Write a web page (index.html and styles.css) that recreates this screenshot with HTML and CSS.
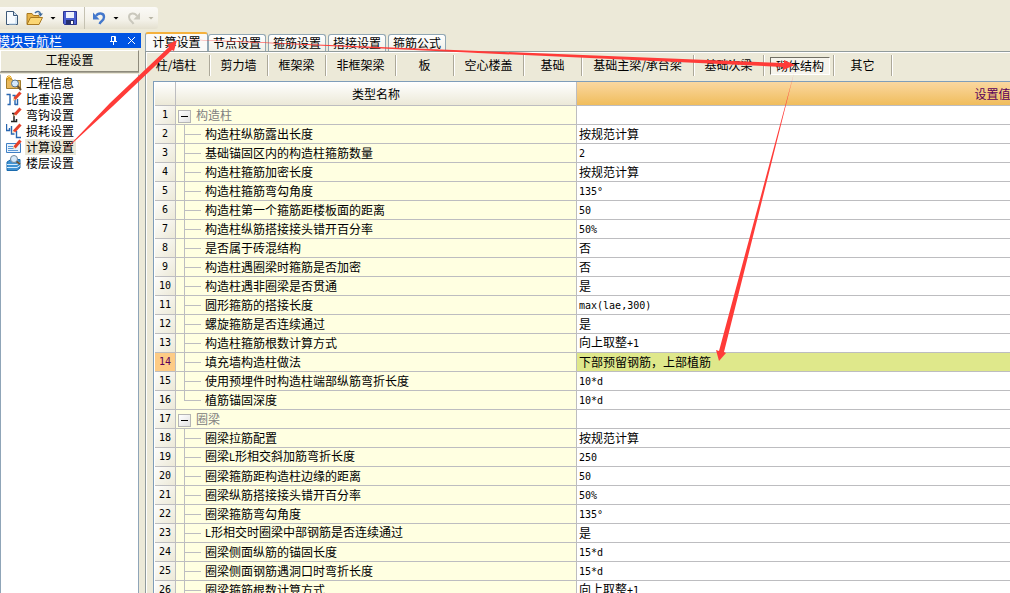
FILE: index.html
```html
<!DOCTYPE html>
<html lang="zh-CN">
<head>
<meta charset="utf-8">
<title>工程设置</title>
<link rel="stylesheet" href="styles.css">
</head>
<body>
<div class="app">
<header class="toolbar" role="toolbar" aria-label="常用">
<button class="tool" aria-label="新建"><svg width="16" height="16" viewBox="0 0 16 16"><path d="M2.500 1.500h7l4 4v9h-11z" fill="#f7fbff" stroke="#3c5878"/><path d="M9.500 1.500v4h4" fill="#cfe0f0" stroke="#3c5878"/><path d="M12 7v7H5" fill="none" stroke="#b7d3ea"/></svg></button>
<button class="tool" aria-label="打开"><svg width="18" height="16" viewBox="0 0 18 16"><path d="M1 14V3.500h5l1.500 2H13V8" fill="#e8b448" stroke="#a87820"/><path d="M1 14.500L4.500 7.500h12L13 14.500z" fill="#fbd673" stroke="#a87820"/><path d="M9 3c2-2.500 5-2 5.500 1" fill="none" stroke="#3f6b9b" stroke-width="1.500"/><path d="M12 3.500h5l-2.500 3z" fill="#3f6b9b"/></svg></button>
<button class="drop" aria-label="打开选项"></button>
<button class="tool save" aria-label="保存"><svg width="16" height="16" viewBox="0 0 16 16"><path d="M1.500 1.500h13v13h-12l-1-1z" fill="#4a5fd0" stroke="#2c3494"/><path d="M4 2h8v6H4z" fill="#eef2fc"/><path d="M4 10h8v4.500H4z" fill="#26306c"/><path d="M9 11h2v3H9z" fill="#fff"/></svg></button>
<span class="bar"></span>
<button class="tool" aria-label="撤销"><svg width="16" height="16" viewBox="0 0 16 16"><path d="M5 6c2-3.500 8-3.500 8 1C13 10.500 10 11 8.500 14" fill="none" stroke="#4478cc" stroke-width="2.400"/><path d="M2 2.500v7h6.500z" fill="#4478cc"/></svg></button>
<button class="drop" aria-label="撤销选项"></button>
<button class="tool redo" aria-label="恢复" disabled><svg width="16" height="16" viewBox="0 0 16 16"><path d="M11 6C9 2.500 3 2.500 3 7 3 10.500 6 11 7.500 14" fill="none" stroke="#cac8bd" stroke-width="2"/><path d="M14 2.500v7H7.500z" fill="#cac8bd"/></svg></button>
<button class="drop off" aria-label="恢复选项" disabled></button>
</header>
<div class="body">
<aside class="side">
<div class="side-title"><span class="side-name">模块导航栏</span>
<button class="cap" aria-label="固定"><svg width="9" height="9" viewBox="0 0 9 9"><path d="M2.500 5V.500h4V5M5.500 1v4M1 5.500h7M4.500 6v3" fill="none" stroke="#fff"/></svg></button>
<button class="cap" aria-label="关闭"><svg width="9" height="9" viewBox="0 0 9 9"><path d="M1 1l7 7M8 1L1 8" fill="none" stroke="#fff"/></svg></button></div>
<button class="section">工程设置</button>
<nav class="list">
<a href="#info" class="item"><svg width="16" height="16" viewBox="0 0 16 16"><path d="M.500 13.500v-10h5l1 2h8v8z" fill="#e9b95c" stroke="#a27c2c"/><path d="M3 0v6M0 3h6M1 1l4 4M5 1L1 5" stroke="#e8a71c"/><circle cx="9" cy="8.500" r="3.500" fill="#d5e9fa" stroke="#56718e"/><path d="M11.500 11l3.500 4" stroke="#6b5230" stroke-width="2"/></svg><span>工程信息</span></a>
<a href="#weight" class="item"><svg width="16" height="16" viewBox="0 0 16 16"><path d="M.500 3.500H4v10H1.500M6.500 4.500H9v9.500M9 13.500h2.500V8" fill="none" stroke="#2866b0" stroke-width="1.400"/><path d="M8.500 8L14.500 1.500" stroke="#e5412b" stroke-width="3"/><path d="M7 10l.500-3 2 1.800z" fill="#f5c88c"/></svg><span>比重设置</span></a>
<a href="#hook" class="item"><svg width="16" height="16" viewBox="0 0 16 16"><path d="M6 6.500h4M8 6v8M5 14.500h5.500V12" fill="none" stroke="#222" stroke-width="1.500"/><path d="M9 7.500L14.500 1.500" stroke="#e5412b" stroke-width="3"/><path d="M7.500 9.500l.300-2.500 1.800 1.600z" fill="#f5c88c"/></svg><span>弯钩设置</span></a>
<a href="#loss" class="item"><svg width="16" height="16" viewBox="0 0 16 16"><path d="M.500 1v6.500h3V5M5.500 3v8h3M10.500 8v6.500H15" fill="none" stroke="#2866b0" stroke-width="1.400"/><path d="M8 8.500L14.500 1.500" stroke="#e5412b" stroke-width="3"/><path d="M6.500 10l.300-2.500 1.800 1.600z" fill="#f5c88c"/></svg><span>损耗设置</span></a>
<a href="#calc" class="item on" aria-current="page"><svg width="16" height="16" viewBox="0 0 16 16"><path d="M.500 4.500h14v9H.500z" fill="#e6f2fd" stroke="#3f7fc4"/><path d="M2 7.500h5M2 9.500h6M2 11.500h10" stroke="#5c98d4"/><path d="M8.500 8.500L14.500 1.500" stroke="#e5412b" stroke-width="3"/><path d="M7 10l.500-2.500 1.800 1.600z" fill="#f5c88c"/></svg><span>计算设置</span></a>
<a href="#floor" class="item"><svg width="16" height="16" viewBox="0 0 16 16"><path d="M1 7l4-2.500h9V13l-3 2.500H1z" fill="#3f92d2" stroke="#1b6bae"/><path d="M1 9.500h10l3-2M1 12.500h10l3-2" fill="none" stroke="#d5edfc"/><circle cx="8" cy="4" r="3.500" fill="#d5e9fa" stroke="#71889c"/><path d="M10.500 6.500L14 9" stroke="#6b5230" stroke-width="1.800"/></svg><span>楼层设置</span></a>
</nav>
</aside>
<main class="main">
<div class="tabs" role="tablist">
<button class="tab on" role="tab" aria-selected="true">计算设置</button>
<button class="tab" role="tab">节点设置</button>
<button class="tab" role="tab">箍筋设置</button>
<button class="tab" role="tab">搭接设置</button>
<button class="tab" role="tab">箍筋公式</button>
</div>
<div class="page">
<div class="kinds" role="toolbar" aria-label="构件类型">
<button class="kind first">柱/墙柱</button>
<button class="kind">剪力墙</button>
<button class="kind">框架梁</button>
<button class="kind wide">非框架梁</button>
<button class="kind">板</button>
<button class="kind wide">空心楼盖</button>
<button class="kind">基础</button>
<button class="kind widest">基础主梁/承台梁</button>
<button class="kind wide">基础次梁</button>
<button class="kind wide" aria-pressed="true"><span class="pressed">砌体结构</span></button>
<button class="kind">其它</button>
</div>
<div class="grid">
<table>
<colgroup><col class="c-no"><col class="c-name"><col class="c-val"></colgroup>
<thead><tr><th></th><th>类型名称</th><th class="h-val">设置值</th></tr></thead>
<tbody>
<tr class="group"><th>1</th><td><button class="fold" aria-label="折叠"></button>构造柱</td><td></td></tr>
<tr><th>2</th><td>构造柱纵筋露出长度</td><td>按规范计算</td></tr>
<tr><th>3</th><td>基础锚固区内的构造柱箍筋数量</td><td><span class="n">2</span></td></tr>
<tr><th>4</th><td>构造柱箍筋加密长度</td><td>按规范计算</td></tr>
<tr><th>5</th><td>构造柱箍筋弯勾角度</td><td><span class="n">135°</span></td></tr>
<tr><th>6</th><td>构造柱第一个箍筋距楼板面的距离</td><td><span class="n">50</span></td></tr>
<tr><th>7</th><td>构造柱纵筋搭接接头错开百分率</td><td><span class="n">50%</span></td></tr>
<tr><th>8</th><td>是否属于砖混结构</td><td>否</td></tr>
<tr><th>9</th><td>构造柱遇圈梁时箍筋是否加密</td><td>否</td></tr>
<tr><th>10</th><td>构造柱遇非圈梁是否贯通</td><td>是</td></tr>
<tr><th>11</th><td>圆形箍筋的搭接长度</td><td><span class="n">max(lae,300)</span></td></tr>
<tr><th>12</th><td>螺旋箍筋是否连续通过</td><td>是</td></tr>
<tr><th>13</th><td>构造柱箍筋根数计算方式</td><td>向上取整<span class="n">+1</span></td></tr>
<tr class="sel"><th>14</th><td>填充墙构造柱做法</td><td>下部预留钢筋，上部植筋</td></tr>
<tr><th>15</th><td>使用预埋件时构造柱端部纵筋弯折长度</td><td><span class="n">10*d</span></td></tr>
<tr class="last"><th>16</th><td>植筋锚固深度</td><td><span class="n">10*d</span></td></tr>
<tr class="group"><th>17</th><td><button class="fold" aria-label="折叠"></button>圈梁</td><td></td></tr>
<tr><th>18</th><td>圈梁拉筋配置</td><td>按规范计算</td></tr>
<tr><th>19</th><td>圈梁<span class="n">L</span>形相交斜加筋弯折长度</td><td><span class="n">250</span></td></tr>
<tr><th>20</th><td>圈梁箍筋距构造柱边缘的距离</td><td><span class="n">50</span></td></tr>
<tr><th>21</th><td>圈梁纵筋搭接接头错开百分率</td><td><span class="n">50%</span></td></tr>
<tr><th>22</th><td>圈梁箍筋弯勾角度</td><td><span class="n">135°</span></td></tr>
<tr><th>23</th><td><span class="n">L</span>形相交时圈梁中部钢筋是否连续通过</td><td>是</td></tr>
<tr><th>24</th><td>圈梁侧面纵筋的锚固长度</td><td><span class="n">15*d</span></td></tr>
<tr><th>25</th><td>圈梁侧面钢筋遇洞口时弯折长度</td><td><span class="n">15*d</span></td></tr>
<tr><th>26</th><td>圈梁箍筋根数计算方式</td><td>向上取整<span class="n">+1</span></td></tr>
</tbody>
</table>
</div>
</div>
</main>
</div>
<svg class="arrows" width="1010" height="593" viewBox="0 0 1010 593" fill="#ff3b38" aria-hidden="true">
<path d="M64 151L110 103L169 47L167 45L177 40L174 51L172 50L113 106Z"/>
<path d="M177 39L784 63V60L795 65L783 70V67Z"/>
<path d="M794 73L724 352L726 353L719 361L716 350L719 351Z"/>
</svg>
</div>
</body>
</html>
```
FILE: styles.css
```css
* { box-sizing: border-box; }
body {
  margin: 0;
  background: #ece9d8;
  color: #000;
  font: 12px/16px "Noto Sans CJK SC", sans-serif;
}
button {
  margin: 0;
  padding: 0;
  border: 0;
  background: none;
  color: inherit;
  font: inherit;
  white-space: nowrap;
}
.app {
  position: relative;
  display: flex;
  flex-direction: column;
  height: 100vh;
  overflow: hidden;
}

/* toolbar */
.toolbar {
  display: flex;
  align-items: center;
  align-self: flex-start;
  height: 22px;
  margin: 7px 0 3px;
  padding: 0 4px;
  border-radius: 0 3px 3px 0;
  background: linear-gradient(#fbfaf7, #f3f1e8 60%, #e4e0cf);
}
.tool { display: flex; margin-right: 6px; }
.drop {
  width: 6px;
  height: 3px;
  background: #000;
  clip-path: polygon(0 0, 100% 0, 50% 100%);
}
.drop.off { background: #b8b5a6; }
.tool.save { margin: 0 6px; }
.bar { width: 1px; height: 22px; margin-right: 6px; background: #c5c2b2; }
.tool.redo { margin-left: 7px; }

.body { display: flex; flex: 1; min-height: 0; }

/* navigation */
.side {
  display: flex;
  flex-direction: column;
  flex: none;
  width: 141px;
  padding-top: 1px;
}
.side-title {
  display: flex;
  align-items: center;
  height: 15px;
  padding-right: 5px;
  background: #0054e3;
  color: #fff;
  font-size: 13px;
}
.side-name { flex: 1; margin-left: -3px; }
.cap { display: flex; margin-left: 9px; }
.section {
  height: 22px;
  margin: 2px 2px 2px 0;
  padding-bottom: 2px;
  border: 1px solid;
  border-color: #fff #8d8a7c #8d8a7c #fff;
  box-shadow: 0 1px #aaa798;
}
.list {
  flex: 1;
  margin-right: 2px;
  border: 1px solid #8fa5b8;
  border-bottom: 0;
  border-top-color: #fff;
  padding-left: 5px;
  background: #fff;
}
.item {
  display: flex;
  gap: 3px;
  height: 16px;
  color: #000;
  text-decoration: none;
}
.item span { padding: 0 2px 0 1px; }
.item.on span { background: #ece9d8; }

/* tabs */
.main {
  display: flex;
  flex-direction: column;
  flex: 1;
  min-width: 0;
  padding-left: 4px;
}
.tabs { display: flex; align-items: flex-end; gap: 2px; height: 19px; }
.tab {
  width: 58px;
  height: 17px;
  border: 1px solid #91a7b4;
  border-bottom: 0;
  border-radius: 3px 3px 0 0;
  background: linear-gradient(#fff, #f0efe6);
}
.tab.on {
  width: 63px;
  height: 20px;
  margin: 0 -2px -1px 0;
  padding-bottom: 2px;
  border-top: 2px solid #f5b13c;
  background: #fbfaf8;
}
.page {
  display: flex;
  flex-direction: column;
  flex: 1;
  min-height: 0;
  padding: 3px 0 0 2px;
  border: 1px solid #919b9c;
  border-width: 1px 0 0 1px;
  box-shadow: inset 1px 1px #fff;
}
.kinds { display: flex; height: 21px; }
.kind {
  flex: none;
  width: 58px;
  padding: 0 2px 2px 0;
  border-right: 1px solid #fff;
  box-shadow: inset -1px 0 #aca899;
}
.kind.first { width: 63px; padding-right: 6px; }
.kind.wide { width: 70px; }
.kind.widest { width: 112px; }
.kind[aria-pressed] { padding: 0; }
.pressed {
  display: block;
  margin: 0 4px 0 5px;
  border: 1px solid;
  border-color: #716f64 #fff #fff #716f64;
  background: #f6f4ec;
}

/* settings grid */
.grid {
  flex: 1;
  min-height: 0;
  margin: 5px 0 0 5px;
  padding: 0 0 0 1px;
  border: 1px solid #7f9db9;
  border-width: 1px 0 0 1px;
  background: #fff;
  overflow: hidden;
}
table { width: 1254px; border-spacing: 0; table-layout: fixed; }
.c-no { width: 21px; }
.c-name { width: 401px; }
th, td {
  height: 19px;
  padding: 0;
  border: 1px solid #bdbdc0;
  border-width: 0 1px 1px 0;
  font-weight: normal;
  line-height: 16px;
  text-align: left;
  white-space: nowrap;
}
thead th {
  height: 24px;
  text-align: center;
  background: linear-gradient(#fff, #ece9d8);
}
thead .h-val {
  background: linear-gradient(#fad7a0, #f0bd5c);
  color: #5a005a;
}
tbody th {
  background: linear-gradient(135deg, #fdfdfb, #ece9d8);
  font: 10px/16px "DejaVu Sans Mono", monospace;
  text-align: center;
}
td:nth-child(2) {
  padding-left: 29px;
  background:
    linear-gradient(#bdbdc0, #bdbdc0) 8px 9px / 17px 1px no-repeat,
    linear-gradient(#bdbdc0, #bdbdc0) 8px 0 / 1px 100% no-repeat,
    #ffffe1;
}
.last td:nth-child(2) {
  background:
    linear-gradient(#bdbdc0, #bdbdc0) 8px 9px / 17px 1px no-repeat,
    linear-gradient(#bdbdc0, #bdbdc0) 8px 0 / 1px 9px no-repeat,
    #ffffe1;
}
.group td:nth-child(2) {
  padding-left: 2px;
  background: #ffffe1;
  color: #808080;
}
td:nth-child(3) { padding-left: 2px; }
.n { font: 10px/16px "DejaVu Sans Mono", monospace; }
.fold {
  width: 13px;
  height: 13px;
  margin-right: 5px;
  border: 1px solid #b5b5b5;
  background:
    linear-gradient(#000, #000) center / 7px 1px no-repeat,
    linear-gradient(135deg, #fff, #e2e2e2);
  vertical-align: middle;
}
.sel th { background: #fdcb85; color: #5a005a; }
.sel td:nth-child(3) { background: #dfe88b; }

/* pointer arrows over the window */
.arrows { position: absolute; left: 0; top: 0; pointer-events: none; }
```
